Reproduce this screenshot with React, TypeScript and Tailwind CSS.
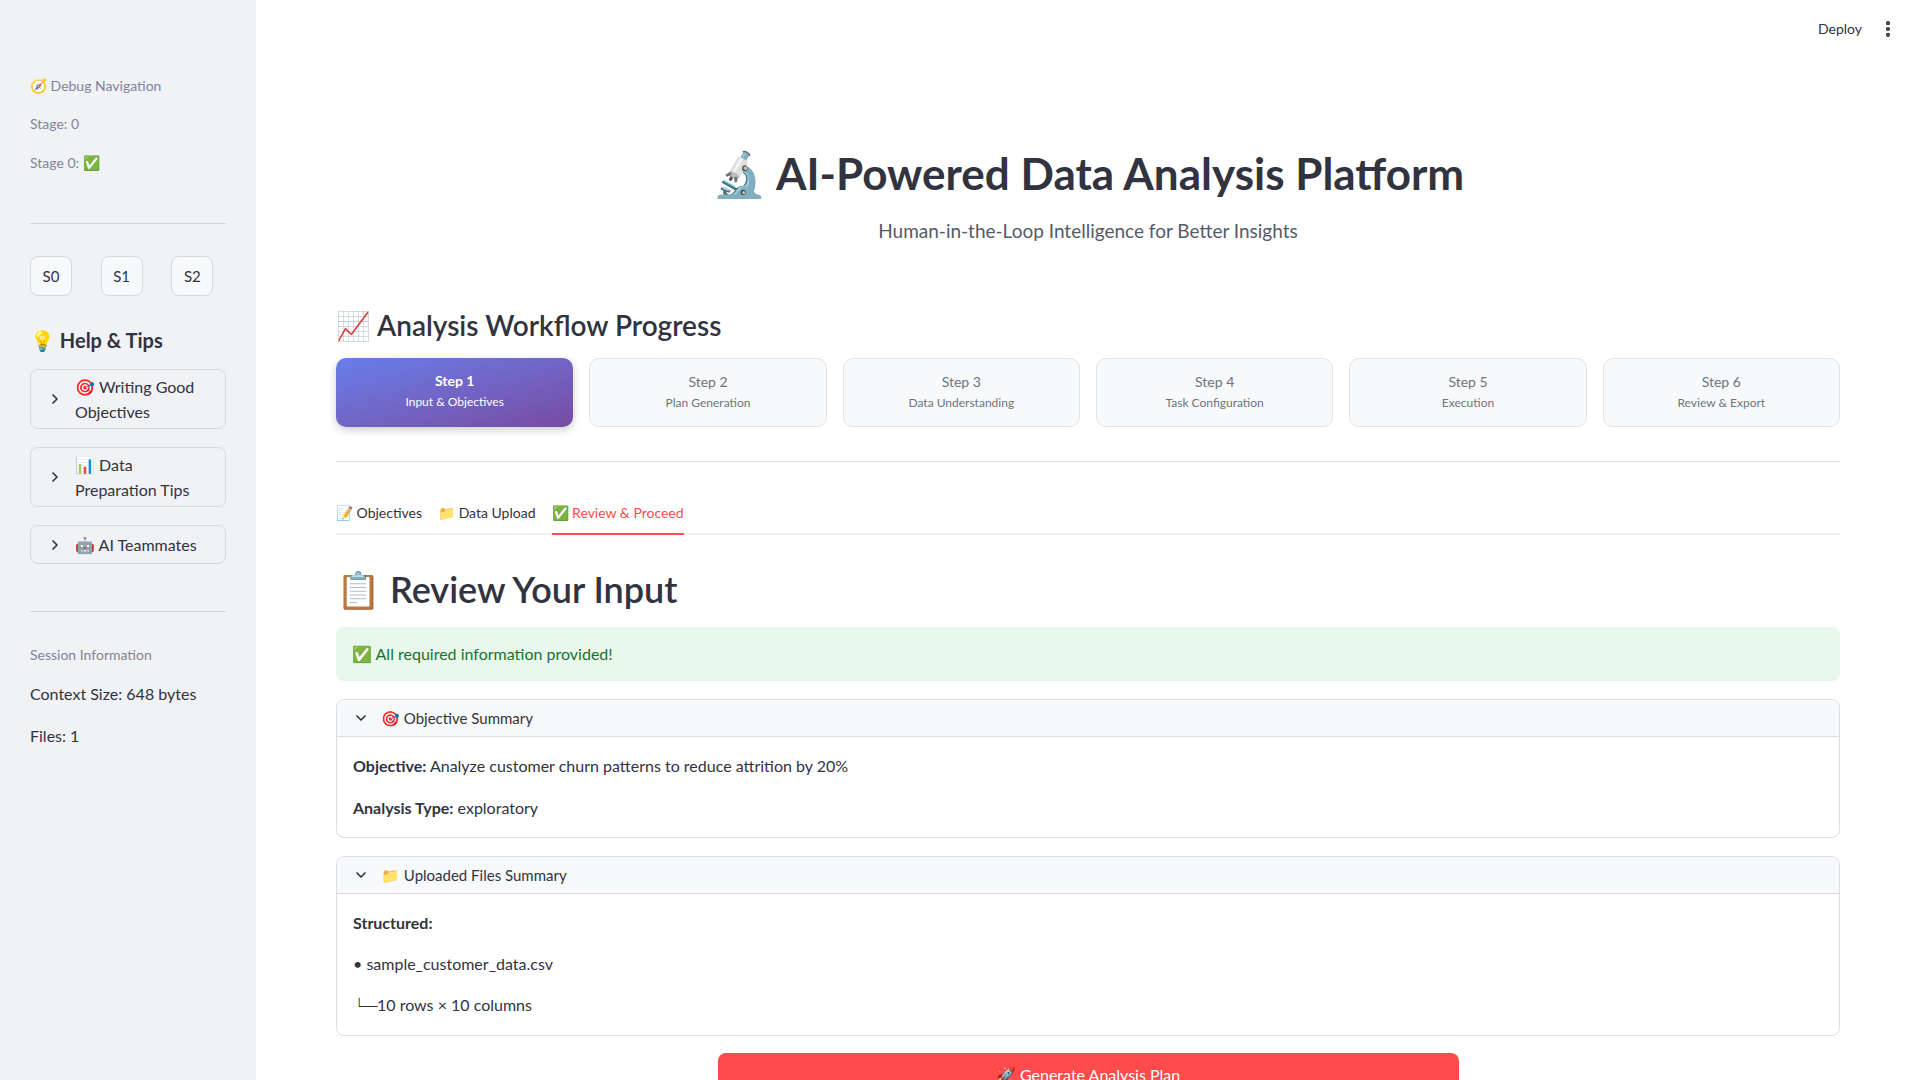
import React from 'react';
import { ChevronRight, ChevronDown, EllipsisVertical } from 'lucide-react';

const font = { fontFamily: '"Source Sans Pro", Lato, "Noto Sans", sans-serif' };

const steps = [
    { n: 1, label: 'Input & Objectives' },
    { n: 2, label: 'Plan Generation' },
    { n: 3, label: 'Data Understanding' },
    { n: 4, label: 'Task Configuration' },
    { n: 5, label: 'Execution' },
    { n: 6, label: 'Review & Export' },
];

const SidebarExpander: React.FC<{ title: string }> = ({ title }) => (
    <div className="flex items-center min-h-[39px] rounded-lg border border-[#d6d8de] pl-4 pr-2 py-[4px]">
        <ChevronRight className="w-4 h-4 shrink-0 text-[#31333f]" strokeWidth={2.5} />
        <span className="ml-3 text-[16px] leading-[25px] text-[#31333f]">{title}</span>
    </div>
);

const Sidebar: React.FC = () => (
    <aside className="w-[256px] shrink-0 bg-[#f0f2f6] min-h-screen px-[30px] pt-[76px]">
        <div className="text-[14px] text-[#808495] leading-[20px]">🧭 Debug Navigation</div>
        <div className="mt-[18px] text-[14px] text-[#808495] leading-[20px]">Stage: 0</div>
        <div className="mt-[19px] text-[14px] text-[#808495] leading-[20px]">Stage 0: ✅</div>
        <hr className="mt-[50px] border-t border-[#d0d2d8]" />
        <div className="mt-[32px] grid grid-cols-3 gap-4">
            {['S0', 'S1', 'S2'].map((s) => (
                <button
                    key={s}
                    className="w-[42px] h-[40px] rounded-lg border border-[#d6d8de] bg-[#f8f9fb] text-[15px] text-[#31333f]"
                >
                    {s}
                </button>
            ))}
        </div>
        <h3 className="mt-[31px] text-[20px] font-bold text-[#31333f] leading-[26px]">💡 Help &amp; Tips</h3>
        <div className="mt-[16px] space-y-[18px]">
            <SidebarExpander title="🎯 Writing Good Objectives" />
            <SidebarExpander title="📊 Data Preparation Tips" />
            <SidebarExpander title="🤖 AI Teammates" />
        </div>
        <hr className="mt-[47px] border-t border-[#d0d2d8]" />
        <div className="mt-[33px] text-[14px] text-[#808495] leading-[20px]">Session Information</div>
        <div className="mt-[18px] text-[16px] text-[#31333f] leading-[22px]">Context Size: 648 bytes</div>
        <div className="mt-[20px] text-[16px] text-[#31333f] leading-[22px]">Files: 1</div>
    </aside>
);

const StepCard: React.FC<{ n: number; label: string; active: boolean }> = ({ n, label, active }) =>
    active ? (
        <div className="h-[69px] rounded-[10px] bg-gradient-to-br from-[#667eea] to-[#764ba2] shadow-[0_3px_8px_rgba(0,0,0,0.2)] flex flex-col items-center justify-center pb-[3px] text-white">
            <div className="text-[14px] font-bold leading-[18px]">Step {n}</div>
            <div className="mt-[4px] text-[12px] leading-[16px]">{label}</div>
        </div>
    ) : (
        <div className="h-[69px] rounded-[10px] bg-[#f8f9fa] border border-[#e1e3e7] flex flex-col items-center justify-center pb-[2px] text-[#6c757d]">
            <div className="text-[14px] leading-[18px]">Step {n}</div>
            <div className="mt-[4px] text-[12px] leading-[16px]">{label}</div>
        </div>
    );

const Main: React.FC = () => (
    <main className="flex-1 relative">
        <div className="absolute top-[18px] right-[22px] flex items-center gap-[16px] text-[14px] text-[#31333f]">
            <span>Deploy</span>
            <EllipsisVertical className="w-5 h-5" strokeWidth={3} />
        </div>
        <div className="px-[80px] pt-[146px]">
            <h1 className="text-center text-[44px] font-bold leading-[54px] text-[#31333f]">
                🔬 AI-Powered Data Analysis Platform
            </h1>
            <p className="mt-[18px] text-center text-[19px] leading-[26px] text-[#555a66]">
                Human-in-the-Loop Intelligence for Better Insights
            </p>
            <h3 className="mt-[63px] text-[28px] font-semibold leading-[36px] text-[#31333f]">
                📈 Analysis Workflow Progress
            </h3>
            <div className="mt-[15px] grid grid-cols-6 gap-4">
                {steps.map((s) => (
                    <StepCard key={s.n} n={s.n} label={s.label} active={s.n === 1} />
                ))}
            </div>
            <hr className="mt-[34px] border-t border-[#dcdde1]" />
            <div className="mt-[40px] flex gap-[16px] border-b-2 border-[#eeeff1] text-[14px]">
                <div className="pb-[10px] text-[#31333f]">📝 Objectives</div>
                <div className="pb-[10px] text-[#31333f]">📁 Data Upload</div>
                <div className="pb-[10px] text-[#ff4b4b] border-b-2 border-[#ff4b4b] -mb-[2px]">✅ Review &amp; Proceed</div>
            </div>
            <h2 className="mt-[32px] text-[36px] font-semibold leading-[44px] text-[#31333f]">📋 Review Your Input</h2>
            <div className="mt-[16px] h-[54px] rounded-lg bg-[#e8f8ec] flex items-center px-4 text-[16px] text-[#177233]">
                ✅ All required information provided!
            </div>
            <div className="mt-[18px] rounded-lg border border-[#dcdde1] overflow-hidden">
                <div className="h-[37px] flex items-center px-4 bg-[#f8f9fa] border-b border-[#dcdde1] text-[15px] text-[#31333f]">
                    <ChevronDown className="w-4 h-4" strokeWidth={2.5} />
                    <span className="ml-3">🎯 Objective Summary</span>
                </div>
                <div className="px-4 pt-[17px] pb-[17px] text-[16px] text-[#31333f] leading-[24px]">
                    <p>
                        <span className="font-bold">Objective:</span> Analyze customer churn patterns to reduce attrition by 20%
                    </p>
                    <p className="mt-[18px]">
                        <span className="font-bold">Analysis Type:</span> exploratory
                    </p>
                </div>
            </div>
            <div className="mt-[18px] rounded-lg border border-[#dcdde1] overflow-hidden">
                <div className="h-[37px] flex items-center px-4 bg-[#f8f9fa] border-b border-[#dcdde1] text-[15px] text-[#31333f]">
                    <ChevronDown className="w-4 h-4" strokeWidth={2.5} />
                    <span className="ml-3">📁 Uploaded Files Summary</span>
                </div>
                <div className="px-4 pt-[17px] pb-[18px] text-[16px] text-[#31333f] leading-[24px]">
                    <p className="font-bold">Structured:</p>
                    <p className="mt-[17px]">• sample_customer_data.csv</p>
                    <p className="mt-[17px]">└─10 rows × 10 columns</p>
                </div>
            </div>
            <div className="mt-[17px] flex justify-center">
                <button className="w-[741px] h-[44px] rounded-lg bg-[#ff4b4b] text-white text-[16px]">
                    🚀 Generate Analysis Plan
                </button>
            </div>
        </div>
    </main>
);

export default function App() {
    return (
        <div className="flex w-full min-h-screen bg-white" style={font}>
            <Sidebar />
            <Main />
        </div>
    );
}
